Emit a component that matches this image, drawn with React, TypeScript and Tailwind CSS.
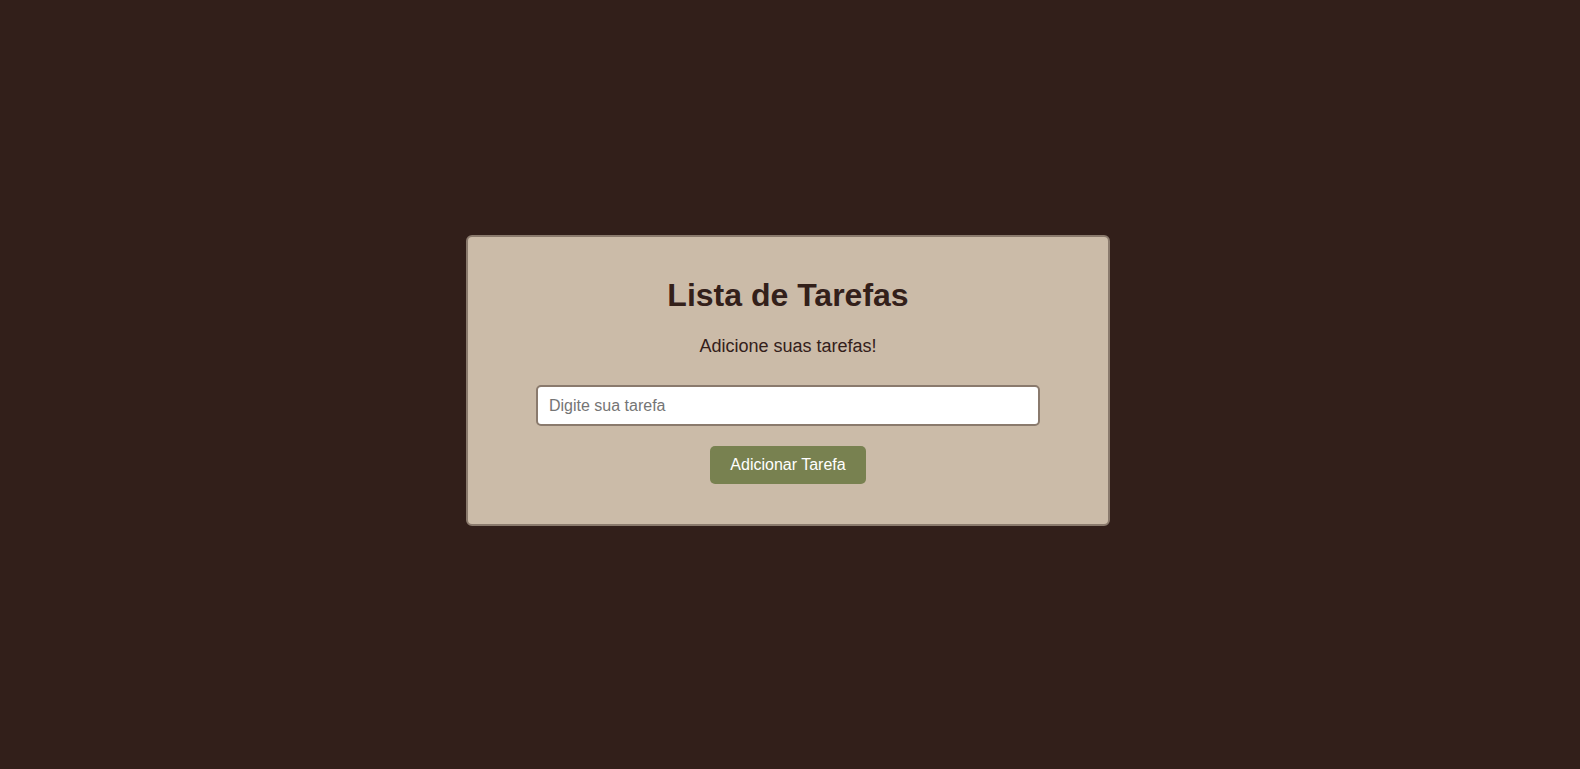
import React from "react";

const App = () => {
  const [task, setTask] = React.useState("");
  const [tasks, setTasks] = React.useState<string[]>([]);

  const handleAdd = () => {
    if (task.trim() === "") return;
    setTasks((prev) => [...prev, task.trim()]);
    setTask("");
  };

  return (
    <div
      className="flex h-screen w-full items-center justify-center bg-[#321f1a] pb-[8px] pr-[4px]"
      style={{ fontFamily: '"Liberation Sans", Arial, sans-serif' }}
    >
      <div className="flex w-[644px] flex-col items-center rounded-md border-2 border-[#8a7a6d] bg-[#cbbba8] py-10">
        <h1 className="text-[32px] font-bold leading-[37px] text-[#33201a]">
          Lista de Tarefas
        </h1>
        <p className="mt-[22px] text-[18px] leading-[21px] text-[#33201a]">
          Adicione suas tarefas!
        </p>
        <input
          className="mt-[28px] h-[41px] w-[504px] rounded-[5px] border-2 border-[#8a7a6d] bg-white px-[11px] text-base text-[#33201a] outline-none placeholder:text-[#757575]"
          type="text"
          placeholder="Digite sua tarefa"
          value={task}
          onChange={(ev) => setTask(ev.currentTarget.value)}
        />
        <button
          className="mt-[20px] cursor-pointer rounded-[5px] bg-[#788150] px-5 py-2.5 text-base leading-[18px] text-white"
          onClick={handleAdd}
        >
          Adicionar Tarefa
        </button>
        {tasks.length > 0 && (
          <ul className="mt-5 w-[504px]">
            {tasks.map((t, i) => (
              <li key={i} className="py-1 text-base text-[#33201a]">
                {t}
              </li>
            ))}
          </ul>
        )}
      </div>
    </div>
  );
};

export default App;
